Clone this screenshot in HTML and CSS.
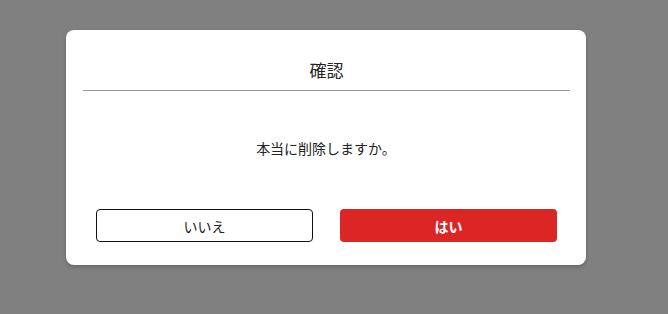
FILE: index.html
```html
<!DOCTYPE html>
<html lang="ja">
<head>
<meta charset="utf-8">
<link rel="stylesheet" href="styles.css">
</head>
<body>
<div class="overlay">
  <div class="dialog">
    <div class="dialog-header">
      <h2 class="dialog-title">確認</h2>
    </div>
    <p class="dialog-message">本当に削除しますか。</p>
    <div class="dialog-actions">
      <button class="btn btn-cancel">いいえ</button>
      <button class="btn btn-confirm">はい</button>
    </div>
  </div>
</div>
</body>
</html>
```
FILE: styles.css
```css
html, body {
  margin: 0;
  padding: 0;
  height: 100%;
}
body {
  background: #808080;
  font-family: "Noto Sans CJK JP", "Noto Sans", sans-serif;
  color: #222;
}
.overlay {
  padding: 30px 0 0 66px;
}
.dialog {
  width: 520px;
  height: 235px;
  box-sizing: border-box;
  background: #fff;
  border-radius: 8px;
  box-shadow: 0 2px 4px rgba(0, 0, 0, 0.2);
  display: flex;
  flex-direction: column;
}
.dialog-header {
  margin: 0 16px 0 17px;
  padding: 28px 0 8px;
  border-bottom: 1px solid #999;
}
.dialog-title {
  margin: 0;
  font-size: 17px;
  font-weight: normal;
  line-height: 24px;
  text-align: center;
}
.dialog-message {
  margin: 47px 0 0;
  font-size: 14px;
  line-height: 20px;
  text-align: center;
}
.dialog-actions {
  display: flex;
  gap: 27px;
  padding: 0 29px 0 30px;
  margin-top: 51px;
}
.btn {
  width: 217px;
  height: 33px;
  box-sizing: border-box;
  border-radius: 4px;
  font-family: "Noto Sans CJK JP", "Noto Sans", sans-serif;
  font-size: 14px;
  line-height: 20px;
  cursor: pointer;
}
.btn-cancel {
  background: #fff;
  border: 1px solid #111;
  color: #222;
}
.btn-confirm {
  background: #dc2626;
  border: none;
  color: #fff;
  font-weight: bold;
}
```
